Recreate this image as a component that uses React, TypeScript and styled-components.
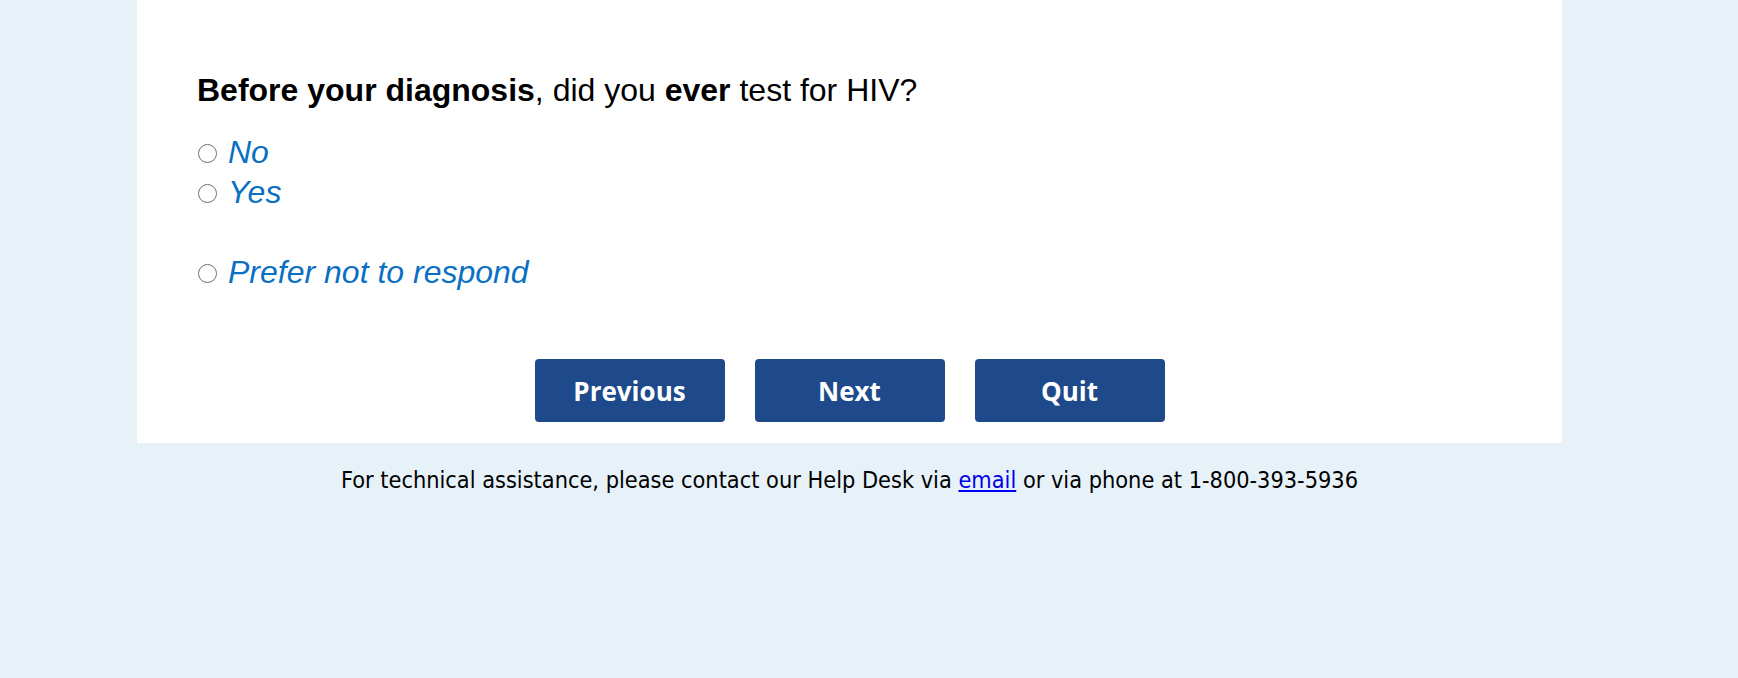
import React from 'react'
import styled, { createGlobalStyle } from 'styled-components'

const options = [
  { value: 'no', label: 'No' },
  { value: 'yes', label: 'Yes' },
  { value: 'refused', label: 'Prefer not to respond', spaced: true },
]

const buttons = ['Previous', 'Next', 'Quit']

const GlobalStyle = createGlobalStyle`
  html, body {
    margin: 0;
    background: #e6f2f8;
  }
`

const Page = styled.div`
  width: 1425px;
  margin-left: 137px;
  min-height: 678px;
`

const Panel = styled.form`
  background: #ffffff;
  padding: 72px 60px 21px 60px;
`

const Question = styled.h2`
  margin: 0;
  font-family: 'Liberation Sans', Arial, sans-serif;
  font-size: 32px;
  line-height: 37px;
  font-weight: 400;
  color: #000;

  b {
    font-weight: 700;
  }
`

const OptionList = styled.div`
  display: flex;
  flex-direction: column;
  margin-top: 23px;
`

const Option = styled.label<{ $spaced?: boolean }>`
  display: flex;
  align-items: flex-start;
  gap: 11px;
  height: 40px;
  margin-top: ${({ $spaced }) => ($spaced ? '40px' : '0')};
  font-family: 'Liberation Sans', Arial, sans-serif;
  font-size: 32px;
  line-height: 40px;
  font-style: italic;
  color: #0b6fc2;
  white-space: nowrap;
  cursor: pointer;
`

const Radio = styled.input`
  appearance: none;
  flex: none;
  width: 19px;
  height: 19px;
  margin: 12px 0 0 1px;
  border: 1.5px solid #707070;
  border-radius: 50%;
  background: #fff;
  box-sizing: border-box;
`

const ButtonRow = styled.div`
  display: flex;
  justify-content: center;
  gap: 30px;
  margin-top: 67px;
`

const NavButton = styled.button`
  width: 190px;
  height: 63px;
  border: none;
  border-radius: 4px;
  background: #1e4a8b;
  color: #fff;
  font-family: 'Open Sans', sans-serif;
  font-weight: 700;
  font-size: 26px;
  cursor: pointer;
`

const Footer = styled.p`
  margin: 0;
  padding-top: 23px;
  text-align: center;
  font-family: 'DejaVu Sans Condensed', Tahoma, sans-serif;
  font-size: 23.3px;
  line-height: 28px;
  color: #000;

  a {
    color: #0000ee;
    text-decoration: underline;
  }
`

export default function App() {
  return (
    <>
      <GlobalStyle />
      <Page>
        <Panel onSubmit={(e) => e.preventDefault()}>
          <Question>
            <b>Before your diagnosis</b>, did you <b>ever</b> test for HIV?
          </Question>
          <OptionList>
            {options.map((o) => (
              <Option key={o.value} $spaced={o.spaced}>
                <Radio type="radio" name="hivtest" value={o.value} />
                {o.label}
              </Option>
            ))}
          </OptionList>
          <ButtonRow>
            {buttons.map((b) => (
              <NavButton type="button" key={b}>
                {b}
              </NavButton>
            ))}
          </ButtonRow>
        </Panel>
        <Footer>
          For technical assistance, please contact our Help Desk via{' '}
          <a href="#">email</a> or via phone at 1-800-393-5936
        </Footer>
      </Page>
    </>
  )
}
